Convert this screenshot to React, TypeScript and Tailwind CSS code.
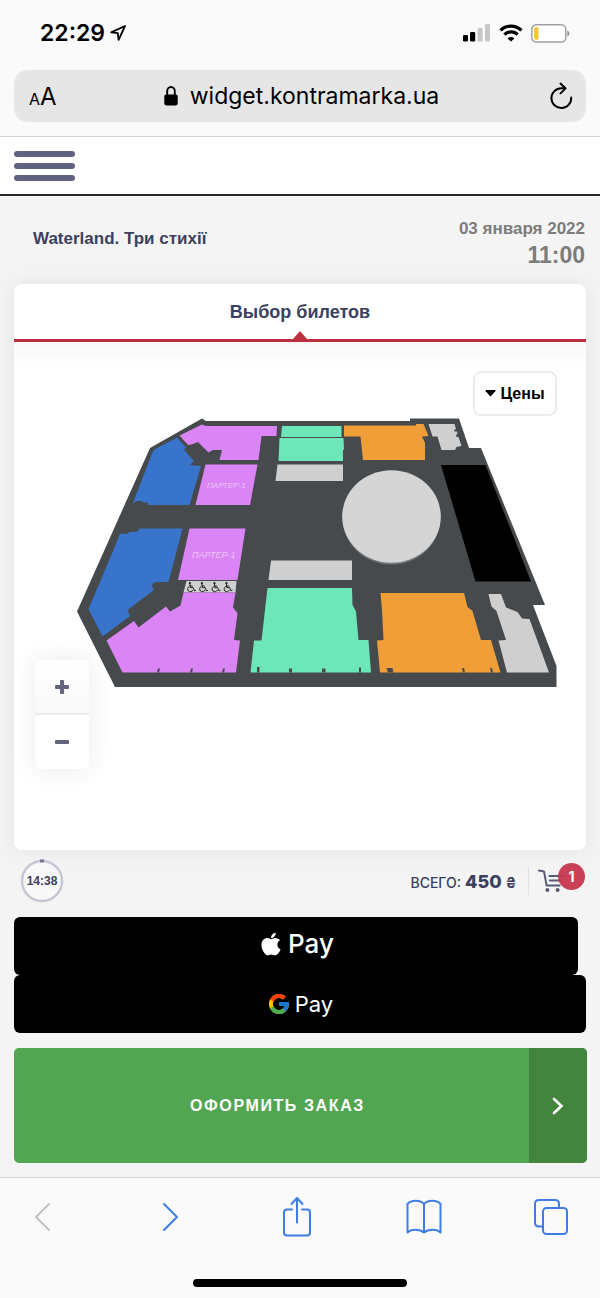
import React from "react";
import { FaApple } from "react-icons/fa";
import { FcGoogle } from "react-icons/fc";

const PLAN = "#474a4c";
const PINK = "#da84f5";
const BLUE = "#3873cc";
const MINT = "#6de6b9";
const ORANGE = "#f09e38";
const GREY = "#cfcfcf";

const sectors: { fill: string; points: string }[] = [
  { fill: BLUE, points: "177,437.5 153.5,450 132.5,504 136,501 142,501 143,502.5 148,502.5 148,505 189.5,505 201,466 190,465 194,461 184,450 186,447.5" },
  { fill: PINK, points: "179.5,435.5 202,424.5 206,426 277,426 276.5,436 261.5,436 258.5,460 219.5,460 222,450 213,450 208.5,452.5 198,442 191.5,444.5 188,445" },
  { fill: MINT, points: "282,426 341.5,426 341.5,437 281,437" },
  { fill: MINT, points: "279.5,438 343.5,438 344,449 343,450.5 343,461 278.5,461 279,450" },
  { fill: GREY, points: "277.5,464.5 343,464.5 343,481 275.5,481" },
  { fill: PINK, points: "205.5,464.5 257.5,464.5 250,505 195.5,505" },
  { fill: BLUE, points: "139.5,528.5 182.5,528.5 168.5,582 155,582 151.5,585 154,590 127.5,610 130,616 102.5,636.5 88.5,609 113.5,550 120,533.5 128,534 129,532 137.5,531.5" },
  { fill: PINK, points: "189.5,528.5 245.5,528.5 237.5,580 178,580" },
  { fill: GREY, points: "186.5,581 236.5,581 235.5,592.5 183.5,592.5" },
  { fill: PINK, points: "183.5,592.5 235.5,592.5 233,607.5 237.5,613 234,640 240,640.5 236,672.5 122.5,672.5 106.5,640.5 134,621 138.5,627.5 166,606.5 170,611.5 180.5,605.5" },
  { fill: GREY, points: "271,560.5 352,560.5 352,580 268.5,580" },
  { fill: MINT, points: "267.5,588 352,588 352.5,605 356,611.5 358.5,640 368.5,640 371,672.5 250.5,672.5 254,640.5 261.5,640.5" },
  { fill: ORANGE, points: "380.5,593 464,593 467.5,607 472.5,611 481,640 491,640 500.5,672.5 380,672.5 377,640.5 383.5,640 382,610" },
  { fill: GREY, points: "488.5,594 501,594 506,607.5 517.5,612 522,618.5 529.5,619 549,672.5 507,672.5 498.5,640.5 506,640 496.5,611 491.5,606.5" },
  { fill: ORANGE, points: "344,425.5 416,425.5 416,424 423.5,424 428.5,436 422,436.5 425,443 425,460 363,460 360.5,436.5 344,436.5" },
  { fill: GREY, points: "428.5,424 454.5,424 456,429 454,430 454.5,431.5 457,431.5 457.5,434 456,435 456.5,437 458.5,437 461.5,446 456.5,447 455,450 441.5,450 437.5,436.5 432.5,436.5" },
  { fill: "#000000", points: "441,465 485.5,465 531,581.5 475.5,581.5" },
];

const notches = [
  "157,672.5 158,668.5 160,668.5 159,672.5",
  "190,672.5 191,668.5 193,668.5 192,672.5",
  "222,672.5 223,668.5 225,668.5 224,672.5",
  "257,672.5 257,667 259.5,667 259.5,672.5",
  "289,672.5 289,668.5 292,668.5 292,672.5",
  "322,672.5 322,668.5 325.5,668.5 325.5,672.5",
  "359,672.5 359,667.5 361,667.5 361,672.5",
  "388,672.5 386.5,668 392.5,668 393.5,672.5",
  "463,672.5 462,668 464,668 465,672.5",
  "491,672.5 490,668 492,668 493,672.5",
];

function Wheelchair({ x }: { x: number }) {
  return (
    <g transform={`translate(${x} 582)`} fill="none" stroke="#111" strokeWidth="0.9" strokeLinecap="round" strokeLinejoin="round">
      <circle cx="2.8" cy="1.1" r="0.6" fill="#111" />
      <path d="M3 2.4 3.2 5.6H6.2L7.5 8.9 8.6 8.4M3.1 4H5.4" />
      <path d="M1.9 4.6A2.8 2.8 0 1 0 5.9 8.2" />
    </g>
  );
}

function HallPlan() {
  return (
    <svg viewBox="77 418 480 270" className="block h-auto w-full" role="img" aria-label="План зала">
      <polygon
        fill={PLAN}
        points="77,611.5 150,448 202,418.5 206,421 410,421 410,418.5 459,418.5 469,448 481,448 545,605 533,605 556.5,666 556.5,687 115,687"
      />
      {sectors.map((s) => (
        <polygon key={s.points} fill={s.fill} points={s.points} />
      ))}
      {notches.map((p) => (
        <polygon key={p} fill={PLAN} points={p} />
      ))}
      <ellipse cx="391.5" cy="518" rx="49" ry="46.5" fill="#74787a" />
      <ellipse cx="391.5" cy="516.5" rx="49.3" ry="46.3" fill="#d5d5d5" />
      <g fill="#ecc4f8" fontFamily="Liberation Sans, sans-serif" fontStyle="italic">
        <text x="207" y="488" fontSize="8">ПАРТЕР-1</text>
        <text x="192" y="558" fontSize="9">ПАРТЕР-1</text>
      </g>
      {[187, 199, 211.5, 223.5].map((x) => (
        <Wheelchair key={x} x={x} />
      ))}
    </svg>
  );
}

function StatusBar() {
  return (
    <div className="flex h-[66px] items-center justify-between pr-[30px] pl-10">
      <div className="flex items-center gap-1">
        <span className="text-[23px] leading-7 font-semibold text-black">22:29</span>
        <svg width="18" height="18" viewBox="0 0 18 18" fill="none" stroke="#000" strokeWidth="1.8" strokeLinejoin="round" aria-hidden="true">
          <path d="M16 2 2.2 8.4 8.8 9.2 9.6 15.8Z" />
        </svg>
      </div>
      <div className="flex items-center gap-2">
        <svg width="28" height="18" viewBox="0 0 28 18" aria-hidden="true">
          <rect x="0" y="11" width="5" height="6.5" rx="1.3" />
          <rect x="7" y="8" width="5.2" height="9.5" rx="1.3" />
          <rect x="14.6" y="4" width="5" height="13.5" rx="1.3" fill="#c8c8c8" />
          <rect x="22" y="0" width="5" height="17.5" rx="1.3" fill="#c8c8c8" />
        </svg>
        <svg width="24" height="18" viewBox="0 0 24 18" fill="none" stroke="#000" strokeWidth="3.3" aria-hidden="true">
          <path d="M1.5 6.4A15 15 0 0 1 22.5 6.4" />
          <path d="M5.4 10.6A9.4 9.4 0 0 1 18.6 10.6" />
          <path d="M12 17.6 8.6 14.4A4.8 4.8 0 0 1 15.4 14.4Z" fill="#000" stroke="none" />
        </svg>
        <svg width="39" height="19" viewBox="0 0 39 19" aria-hidden="true">
          <rect x="0.8" y="0.8" width="34" height="17.2" rx="4.5" fill="#fff" stroke="#a0a0a0" strokeWidth="1.5" />
          <rect x="3" y="3" width="4.6" height="12.8" rx="1.8" fill="#f4c83a" />
          <path d="M36.4 6.6Q38.4 7.4 38.4 9.5T36.4 12.4Z" fill="#8f8f8f" />
        </svg>
      </div>
    </div>
  );
}

function AddressBar() {
  return (
    <div className="mx-[14px] mt-1 mb-[14px] flex h-[52px] items-center justify-between rounded-[14px] bg-[#e6e6e6] pr-3 pl-[15px] text-black">
      <button type="button" aria-label="Размер текста" className="flex w-8 items-baseline pt-1 leading-7">
        <span className="text-[16px]">A</span>
        <span className="text-[24px]">A</span>
      </button>
      <div className="flex items-center gap-3">
        <svg width="14" height="20" viewBox="0 0 14 20" aria-hidden="true">
          <path d="M3.2 9V5.2A3.8 4.2 0 0 1 10.8 5.2V9" fill="none" stroke="#000" strokeWidth="1.9" />
          <rect x="0.3" y="8.4" width="13.4" height="11" rx="1.8" />
        </svg>
        <span className="text-[23px] leading-8">widget.kontramarka.ua</span>
      </div>
      <button type="button" aria-label="Обновить" className="flex w-8 justify-end">
        <svg width="26" height="28" viewBox="0 0 26 28" fill="none" stroke="#000" strokeWidth="2" strokeLinecap="round" strokeLinejoin="round">
          <path d="M17 6.3H13.5A9.9 9.9 0 1 0 23.2 15.6" />
          <path d="M12.5 1.6 17.6 6.4 12.5 11.4" />
        </svg>
      </button>
    </div>
  );
}

function EventHeader() {
  return (
    <div className="flex h-[88px] items-center justify-between pt-[5px] pr-[15px] pl-[33px] font-['Liberation_Sans',sans-serif] font-bold">
      <h1 className="pb-2 text-[17px] leading-5 text-[#3c405f]">Waterland. Три стихії</h1>
      <div className="text-right text-[#7c7c7c]">
        <p className="text-[17px] leading-6">03 января 2022</p>
        <p className="text-[23px] leading-7">11:00</p>
      </div>
    </div>
  );
}

function TicketCard() {
  return (
    <section className="mx-[14px] rounded-[8px] bg-white font-['Liberation_Sans',sans-serif] shadow-[0_0_24px_rgba(0,0,0,0.07)]">
      <div className="relative flex h-[58px] items-center justify-center border-b-3 border-[#bd3040]">
        <h2 className="text-[18px] leading-6 font-bold text-[#3c405f]">Выбор билетов</h2>
        <svg className="absolute bottom-0 left-1/2 -translate-x-1/2" width="14" height="8" viewBox="0 0 14 8" fill="#bd3040" aria-hidden="true">
          <path d="M0 8 7 0 14 8Z" />
        </svg>
      </div>
      <div className="relative rounded-b-[8px] bg-linear-to-b from-[#f8f8f8] to-white to-[24px] pt-[29px] pr-[29px] pb-[162px] pl-[63px]">
        <div className="flex justify-end">
          <button
            type="button"
            className="flex h-[45px] w-[84px] items-center justify-center gap-1 rounded-[8px] border-2 border-[#ececec] bg-white text-[16px] font-bold text-black"
          >
            <svg width="11" height="7" viewBox="0 0 11 7" aria-hidden="true">
              <path d="M1 0H10Q11 .2 10.3 1.2L6 6Q5.5 6.4 5 6L.7 1.2Q0 .2 1 0Z" />
            </svg>
            Цены
          </button>
        </div>
        <div className="mt-[2px]">
          <HallPlan />
        </div>
        <div className="absolute bottom-[81px] left-[21px] flex w-[54px] flex-col overflow-hidden rounded-[6px] bg-white shadow-[0_0_24px_2px_rgba(0,0,0,0.07)]">
          <button type="button" aria-label="Увеличить" className="flex h-[55px] items-center justify-center border-b-2 border-[#ececef] bg-linear-to-b from-white to-[#f9f9fa]">
            <svg width="14" height="14" viewBox="0 0 14 14" fill="#62647e">
              <rect x="0" y="5" width="14" height="4" rx="1" />
              <rect x="5" y="0" width="4" height="14" rx="1" />
            </svg>
          </button>
          <button type="button" aria-label="Уменьшить" className="flex h-[54px] items-center justify-center">
            <svg width="14" height="4" viewBox="0 0 14 4" fill="#62647e">
              <rect width="14" height="4" rx="1" />
            </svg>
          </button>
        </div>
      </div>
    </section>
  );
}

function Summary() {
  return (
    <div className="flex h-[67px] items-center justify-between pr-[15px] pb-[5px] pl-5 text-[#3c405f]">
      <div className="relative flex size-11 items-center justify-center">
        <svg className="absolute inset-0" width="44" height="44" viewBox="0 0 44 44" fill="none" aria-hidden="true">
          <circle cx="22" cy="22" r="20" fill="#f8f8f9" stroke="#c4c6d2" strokeWidth="2.4" />
          <path d="M20 2.1A20 20 0 0 1 24 2.1" stroke="#777991" strokeWidth="3" />
        </svg>
        <span className="relative font-['Liberation_Sans',sans-serif] text-[12px] font-bold">14:38</span>
      </div>
      <div className="flex items-center">
        <p className="flex items-baseline gap-1">
          <span className="text-[14px] font-medium">ВСЕГО:</span>
          <span className="text-[18px] font-extrabold">450</span>
          <span className="text-[14px] font-bold">₴</span>
        </p>
        <div className="mr-2 ml-3 h-7 w-px bg-[#e2e2e6]" />
        <button type="button" aria-label="Корзина, 1 билет" className="relative h-9 w-12">
          <svg className="absolute top-[6px] left-0" width="28" height="24" viewBox="0 0 28 24" fill="none" stroke="#565a76" strokeWidth="2" strokeLinecap="round" strokeLinejoin="round">
            <path d="M2 1.6 7 2.4 9.6 16.6H22.6" />
            <path d="M12.4 7H26M12.8 11.4H25M13 15.2" />
            <circle cx="10.4" cy="21" r="2" fill="#565a76" stroke="none" />
            <circle cx="20.6" cy="21" r="2" fill="#565a76" stroke="none" />
          </svg>
          <span className="absolute top-0 right-0 flex size-[27px] items-center justify-center rounded-full bg-[#c5374d]/95 text-[14px] font-bold text-white">
            1
          </span>
        </button>
      </div>
    </div>
  );
}

function Payments() {
  return (
    <div className="flex flex-col px-[14px] text-white">
      <button type="button" className="mr-2 flex h-[58px] items-center justify-center gap-1 rounded-[6px] bg-black pb-1 text-[26px] leading-8 font-medium">
        <FaApple size={26} aria-hidden="true" />
        Pay
      </button>
      <button type="button" className="flex h-[58px] items-center justify-center gap-1 rounded-[6px] bg-black text-[22px] leading-8">
        <FcGoogle size={24} aria-hidden="true" />
        Pay
      </button>
      <button
        type="button"
        className="-mr-px mt-[15px] flex h-[115px] items-stretch overflow-hidden rounded-[5px] bg-[#52a551] font-['Liberation_Sans',sans-serif] text-[16px] font-bold tracking-widest"
      >
        <span className="flex flex-1 items-center justify-center pl-3">ОФОРМИТЬ ЗАКАЗ</span>
        <span className="flex w-[58px] items-center justify-center bg-[#43843f]">
          <svg width="12" height="18" viewBox="0 0 12 18" fill="none" stroke="#fff" strokeWidth="2.6" strokeLinecap="round" aria-hidden="true">
            <path d="M2 2 9.5 9 2 16" />
          </svg>
        </span>
      </button>
    </div>
  );
}

function BrowserToolbar() {
  return (
    <footer className="mt-[14px] flex flex-1 flex-col items-center justify-between border-t border-[#cfcfcf] bg-[#fafafa] pb-[11px]">
      <nav
        aria-label="Браузер"
        className="flex h-[78px] w-full items-center justify-between pr-[31px] pl-6 text-[#3f7ce6] [&_button]:flex [&_button]:w-9 [&_button]:justify-center [&_svg]:fill-none [&_svg]:stroke-current [&_svg]:stroke-2"
      >
        <button type="button" aria-label="Назад" className="text-[#c2c2c2]">
          <svg width="20" height="32" viewBox="0 0 20 32" strokeLinecap="round" strokeLinejoin="round">
            <path d="M17 3 4 16 17 29" />
          </svg>
        </button>
        <button type="button" aria-label="Вперёд">
          <svg width="20" height="32" viewBox="0 0 20 32" strokeLinecap="round" strokeLinejoin="round">
            <path d="M5 3 18 16 5 29" />
          </svg>
        </button>
        <button type="button" aria-label="Поделиться">
          <svg width="30" height="42" viewBox="0 0 30 42" strokeLinecap="round" strokeLinejoin="round">
            <path d="M10 13.5H5Q2 13.5 2 16.5V36.5Q2 39.5 5 39.5H25Q28 39.5 28 36.5V16.5Q28 13.5 25 13.5H20" />
            <path d="M15 26.5V2.2M9.5 8 15 2 20.5 8" />
          </svg>
        </button>
        <button type="button" aria-label="Закладки">
          <svg width="36" height="36" viewBox="0 0 36 36" strokeLinejoin="round">
            <path d="M18 5C14 .8 5 .8 1.5 5V33.5C5 29.8 14 29.8 18 33.5C22 29.8 31 29.8 34.5 33.5V5C31 .8 22 .8 18 5ZV33.5" />
          </svg>
        </button>
        <button type="button" aria-label="Вкладки">
          <svg width="36" height="38" viewBox="0 0 36 38" strokeLinejoin="round">
            <rect x="10" y="10" width="24" height="26" rx="3.5" />
            <path d="M10 28.5H6Q2 28.5 2 24.5V6Q2 2 6 2H22Q26 2 26 6V10" />
          </svg>
        </button>
      </nav>
      <div className="h-2 w-[214px] rounded-full bg-black" />
    </footer>
  );
}

export default function App() {
  return (
    <div className="flex min-h-screen flex-col bg-[#f4f4f4] font-[Inter,sans-serif]">
      <header className="border-b border-[#d4d4d4] bg-[#fafafa]">
        <StatusBar />
        <AddressBar />
      </header>
      <main>
        <div className="flex h-[59px] items-center border-b-2 border-[#2a2a2c] bg-white px-[14px]">
          <button type="button" aria-label="Меню" className="flex w-[61px] flex-col gap-[6px]">
            <span className="h-[6px] rounded-full bg-[#5f637f]" />
            <span className="h-[6px] rounded-full bg-[#5f637f]" />
            <span className="h-[6px] rounded-full bg-[#5f637f]" />
          </button>
        </div>
        <EventHeader />
        <TicketCard />
        <Summary />
        <Payments />
      </main>
      <BrowserToolbar />
    </div>
  );
}
